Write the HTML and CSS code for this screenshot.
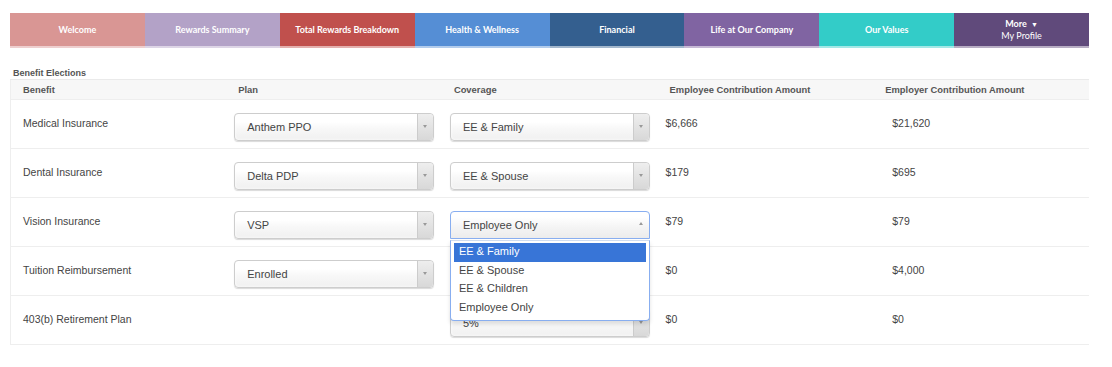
FILE: index.html
```html
<!DOCTYPE html>
<html>
<head>
	<title>Benefit Elections</title>
	<link rel="stylesheet" href="styles.css">
</head>
<body>
	<div class="page">
		<nav class="tabs">
			<a class="tab welcome">Welcome</a>
			<a class="tab summary">Rewards Summary</a>
			<a class="tab breakdown">Total Rewards Breakdown</a>
			<a class="tab health">Health &amp; Wellness</a>
			<a class="tab financial">Financial</a>
			<a class="tab life">Life at Our Company</a>
			<a class="tab values">Our Values</a>
			<a class="tab more">
				<span>More <span class="caret">&#9660;</span></span>
				<span class="profile">My Profile</span>
			</a>
		</nav>

		<div class="section-title">Benefit Elections</div>
		<table class="benefits">
			<thead>
				<tr>
					<th>Benefit</th>
					<th>Plan</th>
					<th>Coverage</th>
					<th>Employee Contribution Amount</th>
					<th>Employer Contribution Amount</th>
				</tr>
			</thead>
			<tbody>
				<tr>
					<td class="name">Medical Insurance</td>
					<td class="pick"><div class="chosen"><span>Anthem PPO</span><b class="arrow"><i></i></b></div></td>
					<td class="pick"><div class="chosen"><span>EE &amp; Family</span><b class="arrow"><i></i></b></div></td>
					<td class="amount">$6,666</td>
					<td class="amount employer">$21,620</td>
				</tr>
				<tr>
					<td class="name">Dental Insurance</td>
					<td class="pick"><div class="chosen"><span>Delta PDP</span><b class="arrow"><i></i></b></div></td>
					<td class="pick"><div class="chosen"><span>EE &amp; Spouse</span><b class="arrow"><i></i></b></div></td>
					<td class="amount">$179</td>
					<td class="amount employer">$695</td>
				</tr>
				<tr>
					<td class="name">Vision Insurance</td>
					<td class="pick"><div class="chosen"><span>VSP</span><b class="arrow"><i></i></b></div></td>
					<td class="pick">
						<div class="chosen open"><span>Employee Only</span><b class="arrow"><i></i></b>
							<ul class="drop">
								<li class="active">EE &amp; Family</li>
								<li>EE &amp; Spouse</li>
								<li>EE &amp; Children</li>
								<li>Employee Only</li>
							</ul>
						</div>
					</td>
					<td class="amount">$79</td>
					<td class="amount employer">$79</td>
				</tr>
				<tr>
					<td class="name">Tuition Reimbursement</td>
					<td class="pick"><div class="chosen"><span>Enrolled</span><b class="arrow"><i></i></b></div></td>
					<td class="pick"></td>
					<td class="amount">$0</td>
					<td class="amount employer">$4,000</td>
				</tr>
				<tr>
					<td class="name">403(b) Retirement Plan</td>
					<td class="pick"></td>
					<td class="pick"><div class="chosen"><span>5%</span><b class="arrow"><i></i></b></div></td>
					<td class="amount">$0</td>
					<td class="amount employer">$0</td>
				</tr>
			</tbody>
		</table>
	</div>
</body>
</html>
```

FILE: styles.css
```css
body {
	margin: 0;
	font-family: "Liberation Sans", Arial, sans-serif;
	background: #fff;
	color: #555;
}
.page {
	padding: 13px 23px 0 10px;
}
.tabs {
	display: flex;
	height: 35px;
}
.tab {
	flex: 1;
	display: flex;
	flex-direction: column;
	justify-content: center;
	align-items: center;
	color: #fff;
	font-family: Lato, "Open Sans", sans-serif;
	font-weight: bold;
	font-size: 9px;
	line-height: 11px;
	border-bottom: 2px solid rgba(255, 255, 255, 0.55);
	box-sizing: border-box;
}
.welcome { background-color: #d99694; }
.summary { background-color: #b3a2c7; }
.breakdown { background-color: #c0504d; }
.health { background-color: #558ed5; }
.financial { background-color: #345f8f; }
.life { background-color: #8064a2; }
.values { background-color: #33ccc8; }
.more { background-color: #604a7b; }
.more .caret {
	font-size: 7px;
	margin-left: 2px;
}
.more .profile {
	font-weight: normal;
}

.section-title {
	font-size: 9px;
	font-weight: bold;
	color: #555;
	margin-top: 19px;
	padding-left: 3px;
	line-height: 12px;
}
.benefits {
	width: 100%;
	border-collapse: collapse;
	table-layout: fixed;
	border-left: 1px solid #eee;
}
.benefits th {
	background: #f7f7f7;
	border-top: 1px solid #eaeaea;
	text-align: left;
	font-size: 9.4px;
	font-weight: bold;
	color: #555;
	height: 20px;
	padding: 0 12px;
	box-sizing: border-box;
}
.benefits td {
	border-top: 1px solid #eee;
	border-bottom: 1px solid #eee;
	height: 49px;
	box-sizing: border-box;
	vertical-align: top;
	font-size: 10.5px;
	color: #444;
	padding: 13px 8px 0;
	line-height: 20px;
}
.benefits td.name {
	padding-left: 12px;
}
.benefits td.employer {
	padding-left: 19px;
}

.chosen {
	position: relative;
	height: 28px;
	border: 1px solid #cdcdcd;
	border-radius: 4px;
	background: linear-gradient(#fff 30%, #f8f8f8 55%, #f0f0f0 100%);
	box-shadow: 0 0 3px #fff inset, 0 1px 1px rgba(0, 0, 0, 0.15);
	box-sizing: border-box;
	font-size: 11px;
	color: #444;
	line-height: 26px;
	padding-left: 12px;
}
.chosen .arrow {
	position: absolute;
	top: 0;
	right: 0;
	bottom: 0;
	width: 15px;
	border-left: 1px solid #ccc;
	border-radius: 0 4px 4px 0;
	background: linear-gradient(#eee, #d8d8d8);
}
.chosen .arrow i {
	position: absolute;
	left: 5px;
	top: 11px;
	border-left: 2.5px solid transparent;
	border-right: 2.5px solid transparent;
	border-top: 3px solid #999;
}
.chosen.open {
	border-color: #88aef0;
	border-radius: 4px 4px 0 0;
	background: linear-gradient(#fff 20%, #f4f4f4 60%, #ececec 100%);
	box-shadow: 0 1px 0 #fff inset;
}
.chosen.open .arrow {
	background: none;
	border-left: none;
}
.chosen.open .arrow i {
	top: 10px;
	border-top: none;
	border-bottom: 3px solid #999;
}
.drop {
	position: absolute;
	top: 28px;
	left: -1px;
	right: -1px;
	margin: 0;
	padding: 2px 3px 3px;
	list-style: none;
	background: #fff;
	border: 1px solid #88aef0;
	border-top-color: #cfdcf0;
	border-radius: 0 0 4px 4px;
	box-shadow: 0 3px 4px rgba(0, 0, 0, 0.12);
	z-index: 5;
}
.drop li {
	height: 18.5px;
	line-height: 17px;
	padding-left: 5px;
	font-size: 11px;
	color: #444;
}
.drop li.active {
	background: #3875d7;
	color: #fff;
}
```
